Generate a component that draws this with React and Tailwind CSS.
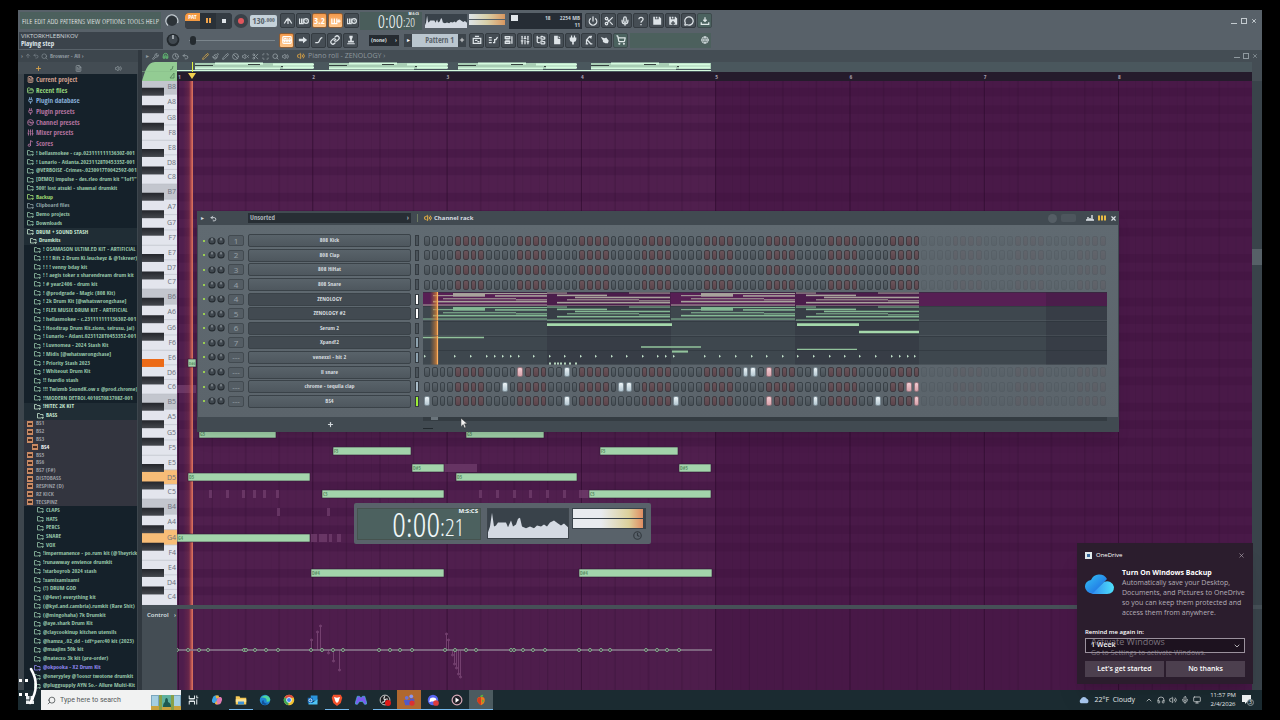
import {
  ArrowUp,
  Ban,
  ChevronDown,
  ChevronUp,
  Clock,
  Disc3,
  FileText,
  FolderOpen,
  FolderTree,
  Globe,
  Headphones,
  KeyboardMusic,
  Link,
  Magnet,
  MessageCircle,
  Mic,
  Monitor,
  Music2,
  Paintbrush,
  Pencil,
  Plug,
  Plus,
  Power,
  Scan,
  Scissors,
  Search,
  ShoppingCart,
  SlidersVertical,
  Undo2,
  Volume2,
  VolumeX,
  Wrench,
  X,
} from 'lucide-react';

const SEMI = 8.75;
const OCTAVE = SEMI * 12;
const KEYS_TOP = -2;
const BLACK_ROWS = [1, 3, 5, 8, 10];
const BAR = 134.3;

const CATEGORIES = [
  ['Current project', 'text-[#d3a08e]', FileText],
  ['Recent files', 'text-[#96d67c]', FolderOpen],
  ['Plugin database', 'text-[#86aed6]', Plug],
  ['Plugin presets', 'text-[#b3739f]', Plug],
  ['Channel presets', 'text-[#b3739f]', Disc3],
  ['Mixer presets', 'text-[#b3739f]', SlidersVertical],
  ['Scores', 'text-[#b3739f]', Music2],
];

// [name, depth, tone]
const FOLDERS = [
  ['! bellasmokee - cap.02311111113630Z-001', 0],
  ['! Lunario - Atlanta.20231128T045335Z-001', 0],
  ['@VERBOISE -Crimes-.0230917T004259Z-001', 0],
  ['[DEMO] impulse - des.rleo drum kit "1of1"', 0],
  ['500! lost atsuki - shawnaI drumkit', 0],
  ['Backup', 0, 'lime'],
  ['Clipboard files', 0, 'grey'],
  ['Demo projects', 0],
  ['Downloads', 0],
  ['DRUM + SOUND STASH', 0, 'open'],
  ['Drumkits', 1, 'open'],
  ['!  OSAMASON ULTIM.ED KIT - ARTIFICIAL', 2],
  ['! ! ! Rift 2 Drum Ki.leucheyz & @1skreer)', 2],
  ['! ! ! venny bday kit', 2],
  ['! ! aegis toker x sharendream drum kit', 2],
  ['! # year2406 - drum kit', 2],
  ['! @prodgrade - Magic (808 Kit)', 2],
  ['! 2k Drum Kit [@whatswrongchase]', 2],
  ['! FLEX MUSIX DRUM KIT - ARTIFICIAL', 2],
  ['! hellasmokee - c.23111111113630Z-001', 2],
  ['! Hoodtrap Drum Kit.zions, teirusu, jai)', 2],
  ['! Lunario - Atlant.0231128T045335Z-001', 2],
  ['! Luvnomea - 2024 Stash Kit', 2],
  ['! Midis [@whatswrongchase]', 2],
  ['! Priority Stash 2023', 2],
  ['! Whiteout Drum Kit', 2],
  ['!! feardio stash', 2],
  ['!!! Twizmb SoundK.ow x @prod.chrome)', 2],
  ['!!MODERN DETROI.4010ST083708Z-001', 2],
  ['!HITEC 2K KIT', 2, 'open'],
  ['BASS', 3, 'open'],
];

const SAMPLES = ['BS1', 'BS2', 'BS3', 'BS4', 'BS5', 'BS6', 'BS7 (F#)', 'DISTOBASS', 'RESPINZ (D)', 'RZ KICK', 'TECSPINZ'];

const KITS = [
  ['CLAPS', 3],
  ['HATS', 3],
  ['PERCS', 3],
  ['SNARE', 3],
  ['VOX', 3],
  ['!impermanence - po.rum kit (@1heyrick', 2],
  ['!runawway envience drumkit', 2],
  ['!starboyrob 2024 stash', 2],
  ['!xamixamixami', 2],
  ['(!) DRUM GOD', 2],
  ['(@4evr) everything kit', 2],
  ['(@kyd.and.cambria).rumkit (Rare Shit)', 2],
  ['(@mingohaha) 7k Drumkit', 2],
  ['@aye.shark Drum Kit', 2],
  ['@claycookinup kitchen utensils', 2],
  ['@hamza_.02_dd - tdf+perc40 kit (2023)', 2],
  ['@maajins 50k kit', 2],
  ['@natecxo 3k kit (pre-order)', 2],
];

const LAST_KITS = [
  ['@okpooka - X2 Drum Kit', 2, 'blue'],
  ['@oneryyley @1ooscr twotone drumkit', 2],
  ['@pluggsupply AYN So.- Allure Multi-Kit', 2],
];

const INDENT = ['pl-[3px]', 'pl-[6px]', 'pl-[10px]', 'pl-[13px]'];

const TONES = {
  green: 'text-[#96c4a8]',
  lime: 'text-[#a3dc74]',
  grey: 'text-[#8fa3a6]',
  open: 'text-[#c6e6cf] bg-[#202d35]',
  blue: 'text-[#8f86ee]',
};

// x, centre y, width, label
const NOTES = [
  [11, 282, 8, 'D#6'],
  [22, 353, 77, 'G5'],
  [11, 396, 122, 'D5'],
  [0, 457, 133, 'G4'],
  [156, 370, 78, 'F5'],
  [235, 387, 32, 'D#5'],
  [145, 413, 122, 'C5'],
  [134, 492, 133, 'D#4'],
  [289, 353, 78, 'G5'],
  [279, 396, 121, 'D5'],
  [423, 370, 78, 'F5'],
  [502, 387, 32, 'D#5'],
  [412, 413, 122, 'C5'],
  [402, 492, 133, 'D#4'],
];

const GHOSTS = [
  [32, 413, 3], [49, 413, 3], [65, 413, 3], [76, 413, 3], [86, 413, 3], [99, 413, 3],
  [302, 413, 3], [319, 413, 3], [336, 413, 3], [352, 413, 3], [369, 413, 3], [386, 413, 3], [402, 413, 11],
  [267, 387, 33], [100, 431, 3], [150, 431, 3], [134, 457, 6], [142, 457, 8], [152, 457, 3], [160, 457, 4], [0, 308, 19],
];

const VELOCITY = [
  0, 11, 22, 31, 67, 69, 78, 89, 101, 134, 145, 156, 166, 202, 213, 223, 235, 268, 278, 289, 299, 334, 337, 346, 356,
  368, 402, 413, 424, 433, 469, 480, 490, 502,
];
const SPIKES = [
  [134, 31], [140, 23], [143, 17], [151, 44], [156, 52], [162, 61], [269, 25], [271, 31], [275, 46], [277, 55], [279, 59], [281, 65], [283, 68],
];

const BLOCK_A = [
  [0, 12, 124, 1], [10, 8.5, 114, 1.5], [20, 6, 73, 1], [93, 7, 31, 1], [10, 3, 20, 1], [30, 1, 32, 3.5], [62, 1, 62, 1], [72, 3, 52, 1.5],
];
const BLOCK_B = [
  [0, 13, 123, 1], [0, 0.5, 20, 1], [10, 2.5, 50, 1.5], [28, 4.5, 95, 1.5], [82, 0.5, 41, 1], [20, 7, 72, 1], [92, 8, 31, 1], [10, 9.5, 113, 1.5],
];
const HIT_DOTS = [
  1, 31, 47, 63, 71, 79, 87, 95, 110, 126, 141, 157, 172, 188, 203, 219, 234, 242, 250, 281, 296, 312, 328, 343, 359, 374,
  390, 406, 421, 436, 452, 468, 476, 484, 491,
];

const CHANNELS = [
  { slot: '1', name: '808 Kick', steps: [] },
  { slot: '2', name: '808 Clap', steps: [] },
  { slot: '3', name: '808 HiHat', steps: [] },
  { slot: '4', name: '808 Snare', steps: [] },
  { slot: '4', name: 'ZENOLOGY', lane: 'selected', meter: 'bg-white' },
  { slot: '5', name: 'ZENOLOGY #2', lane: 'chords', meter: 'bg-white' },
  { slot: '6', name: 'Serum 2', lane: 'serum' },
  { slot: '7', name: 'Xpand!2', lane: 'xpand', meter: 'bg-[#8ea3b0]' },
  { slot: '---', name: 'venexxi - hit 2', lane: 'hits', meter: 'bg-[#8ea3b0]' },
  { slot: '---', name: 'll snare', steps: [12, 18, 41, 42, 44, 50] },
  { slot: '---', name: 'chrome - tequila clap', steps: [10, 25, 26, 62, 63], meter: 'bg-[#a9bcc8]' },
  { slot: '---', name: 'BS4', steps: [0, 18, 32, 44, 50, 58, 63], meter: 'bg-[#9dee35]' },
];

const SPECTRUM =
  'M0 30V24L2 18L4 4L6 18L8 17L10 14H18L20 19L23 12L25 18L28 16L30 10L32 9L34 18L38 20L42 18L46 20L49 17L53 18L56 16L59 18L62 14L66 12L70 15L73 17L76 15L80 19V30Z';

function Tool({ icon: Icon, label, hot, green }) {
  return (
    <button
      type="button"
      aria-label={label}
      className={`flex size-[15px] shrink-0 items-center justify-center rounded-xs border ${
        hot
          ? 'border-[#8c5c34] bg-linear-to-b from-[#f39a4b] to-[#ffc78c] text-white'
          : green
          ? 'border-[#3e4b4d] bg-[#4b625f] text-[#dfe8e8]'
          : 'border-[#343b41] bg-[#454d54] text-[#dde3e7]'
      }`}
    >
      <Icon className="size-[10px]" strokeWidth={3} />
    </button>
  );
}

function Knob({ small }) {
  return (
    <svg viewBox="0 0 14 14" className={small ? 'size-[8px] shrink-0' : 'size-[14px] shrink-0'} aria-hidden="true">
      <circle cx="7" cy="7" r="6.3" fill="#23292e" />
      <circle cx="7" cy="6.5" r="4.6" fill="#40484f" />
      <path d="M7 6V2" stroke="#c6ced3" strokeWidth="1.4" />
    </svg>
  );
}

/* the big knob wears a light ring that marks its level */
function MainKnob() {
  return (
    <svg viewBox="0 0 14 14" className="size-[14px] shrink-0" aria-hidden="true">
      <circle cx="7" cy="7" r="5" fill="#2c3338" />
      <path d="M3 11.500A6 6 0 1 1 12.500 9" fill="none" stroke="#c9d1d6" strokeWidth="1.2" />
    </svg>
  );
}

function Metronome(props) {
  return (
    <svg viewBox="0 0 24 24" fill="none" stroke="currentColor" {...props}>
      <path d="M3 18 9 8h6l6 10M12 19V4M8 11l4-4 4 4" />
    </svg>
  );
}

function Keys(props) {
  return (
    <svg viewBox="0 0 24 24" fill="none" stroke="currentColor" {...props}>
      <path d="M2 6v12h12V6M8 6v12M19 8v8M15 12h8" />
    </svg>
  );
}

function KeysClock(props) {
  return (
    <svg viewBox="0 0 24 24" fill="none" stroke="currentColor" {...props}>
      <path d="M1 6v12h9V6M6 6v12" />
      <circle cx="17" cy="12" r="5.500" />
      <path d="M17 9v3h2" strokeWidth="2" />
    </svg>
  );
}

function StepEdit(props) {
  return (
    <svg viewBox="0 0 24 24" fill="none" stroke="currentColor" {...props}>
      <path d="M2 6h7M2 12h7M2 18h7M12 18h4V11h3L23 5" />
    </svg>
  );
}

function Stamp(props) {
  return (
    <svg viewBox="0 0 24 24" fill="currentColor" {...props}>
      <path d="M8 2h8v4l-2 4v4h5v4H5v-4h5v-4L8 6zM3 20h18v2H3z" />
    </svg>
  );
}

function Slide(props) {
  return (
    <svg viewBox="0 0 24 24" fill="none" stroke="currentColor" {...props}>
      <path d="M3 18h6c6 0 3-12 11-12" />
    </svg>
  );
}

function Arrow(props) {
  return (
    <svg viewBox="0 0 24 24" fill="currentColor" {...props}>
      <path d="M2 9h10V4l10 8-10 8v-5H2z" />
    </svg>
  );
}

function Page(props) {
  return (
    <svg viewBox="0 0 24 24" fill="currentColor" {...props}>
      <path d="M5 2h9v7h6v13H5zM16 2l4 5h-4z" />
    </svg>
  );
}

function PlugSolid(props) {
  return (
    <svg viewBox="0 0 24 24" fill="currentColor" {...props}>
      <path d="M7 1h3v5h4V1h3v5h3v5q0 5-6 6v6h-4v-6q-6-1-6-6V6h3z" />
    </svg>
  );
}

/* a figure bending over, the tempo tapper */
function Tapper(props) {
  return (
    <svg viewBox="0 0 24 24" fill="none" stroke="currentColor" {...props}>
      <path d="M4 21h6M6 21V12l7-8 5 4M8 12l8 9h4M15 3h4" />
    </svg>
  );
}

function Hand(props) {
  return (
    <svg viewBox="0 0 24 24" fill="currentColor" {...props}>
      <path d="M2 5l9 3 4-2 6 8-2 6h-6l-6-3v-4z" />
    </svg>
  );
}

function Disk({ plus, ...props }) {
  return (
    <svg viewBox="0 0 24 24" fill="currentColor" {...props}>
      <path d="M3 2h4v6h9V2h2l4 4v15H3zM9 2h4v4H9z" />
      {plus && <path d="M12 12v10M7 17h10" stroke="#454d54" />}
    </svg>
  );
}

function DiskPlus(props) {
  return <Disk plus {...props} />;
}

function Question(props) {
  return (
    <svg viewBox="0 0 24 24" fill="none" stroke="currentColor" {...props}>
      <path d="M7 8c0-6 10-6 10 0 0 4-5 4-5 8M12 19v3" />
    </svg>
  );
}

function ThreeTwo() {
  return <span className="text-[9px] leading-none">3.2</span>;
}

function PlaylistGlyph(props) {
  return (
    <svg viewBox="0 0 24 24" fill="none" stroke="currentColor" {...props}>
      <path d="M3 8h18v12H3zM7 3h10M7 13h6M13 16h5" />
    </svg>
  );
}

function RackGlyph(props) {
  return (
    <svg viewBox="0 0 24 24" fill="none" stroke="currentColor" {...props}>
      <path d="M3 4h11v4H3zM3 12h11M3 16h11v4H3zM19 3v18" />
    </svg>
  );
}

function DownloadTray(props) {
  return (
    <svg viewBox="0 0 24 24" fill="none" stroke="currentColor" {...props}>
      <path d="M12 3v10M8 9l4 4 4-4M3 15v5h18v-5" />
    </svg>
  );
}

function Spectrum() {
  return (
    <svg viewBox="0 0 80 30" preserveAspectRatio="none" className="size-full bg-[#39424a]" aria-hidden="true">
      <path d={SPECTRUM} fill="#d4dae3" />
    </svg>
  );
}

function Toolbar() {
  return (
    <header className="flex h-[40px] shrink-0 flex-col bg-[#586169]">
      <div className="flex h-[21px] items-center pl-[2px]">
        <nav className="flex h-[17px] w-[141px] items-center justify-between bg-[#4c605d] px-[2px] font-['Open_Sans_Condensed_Light','Lato',sans-serif] text-[8px] font-light text-white">
          {['FILE', 'EDIT', 'ADD', 'PATTERNS', 'VIEW', 'OPTIONS', 'TOOLS', 'HELP'].map((item) => (
            <button key={item} type="button">
              {item}
            </button>
          ))}
        </nav>
        <div className="flex w-[22px] justify-center">
          <MainKnob />
        </div>
        <div className="ml-[2px] flex h-[16px] w-[47px] overflow-hidden rounded-sm bg-[#2a3138]">
          <button type="button" className="flex w-[15px] flex-col bg-[#3a3f45] text-center text-[6px] text-white">
            <span className="w-full bg-[#f49a42] leading-[8px]">PAT</span>
          </button>
          <button type="button" aria-label="Pause" className="flex w-[16px] items-center justify-center gap-px">
            <span className="h-[5px] w-[2px] bg-[#f0a44c]" />
            <span className="h-[5px] w-[2px] bg-[#f0a44c]" />
          </button>
          <button type="button" aria-label="Stop" className="flex w-[16px] items-center justify-center bg-[#343c43]">
            <span className="size-[4px] bg-[#dfe5e9]" />
          </button>
        </div>
        <button type="button" aria-label="Record" className="mx-[2px] flex size-[14px] items-center justify-center rounded-full bg-[#3a4148]">
          <span className="size-[6px] rounded-full bg-[#e0565c]" />
        </button>
        <div className="flex h-[12px] w-[27px] items-center justify-center rounded-xs bg-[#c5d2da] text-[9px] text-[#5a646c]">
          130<span className="text-[6px]">.000</span>
        </div>
        <div className="ml-[3px] flex gap-px">
          <Tool icon={Metronome} label="Metronome" />
          <Tool icon={KeysClock} label="Wait for input" />
          <Tool icon={ThreeTwo} label="Countdown" hot />
          <Tool icon={Keys} label="Step edit" hot />
          <Tool icon={KeysClock} label="Loop record" />
        </div>
        <div className="ml-px flex h-[18px] w-[62px] items-center justify-end bg-[#4a5d5b] pr-[3px] font-['Open_Sans_Condensed_Light','Lato',sans-serif] font-light text-[#f2f8f8]">
          <span className="text-[18px] leading-[18px]">0:00</span>
          <span className="flex w-[16px] flex-col">
            <span className="self-end font-['Open_Sans_Condensed','Lato',sans-serif] text-[4px] leading-[4px] font-bold">M:S:CS</span>
            <span className="text-[12px] leading-[14px]">:20</span>
          </span>
        </div>
        <div className="ml-[3px] h-[14px] w-[42px]">
          <Spectrum />
        </div>
        <div className="ml-[2px] flex h-[14px] w-[36px] flex-col gap-px">
          <div className="h-[5px] bg-linear-to-r from-[#dfe4e8] via-[#d9d0a8] to-[#d9975f]" />
          <div className="h-[5px] bg-linear-to-r from-[#dfe4e8] via-[#d9d0a8] to-[#d9975f]" />
        </div>
        <div className="ml-[4px] flex h-[16px] w-[73px] items-start justify-between bg-[#262d35] p-[2px] text-[6px] leading-[7px] text-[#c4cdd3]">
          <span className="h-[6px] w-[7px] bg-[#e1e6ea]" />
          <span className="pl-[18px]">18</span>
          <span className="text-right">
            2254 MB
            <br />
            11
          </span>
        </div>
        <div className="ml-[3px] flex gap-px">
          <Tool icon={Power} label="Audio" />
          <Tool icon={Scissors} label="Cut" />
          <Tool icon={Mic} label="Record audio" />
          <Tool icon={Question} label="Help" />
          <Tool icon={Disk} label="Save" />
          <Tool icon={DiskPlus} label="Save new version" />
          <Tool icon={MessageCircle} label="Chat" />
          <Tool icon={DownloadTray} label="Downloads" green />
        </div>
        <div className="ml-auto flex gap-[4px] pr-[5px] text-[#c3cacf]">
          <button type="button" aria-label="Minimize" className="flex size-[6px] items-end">
            <span className="h-px w-full bg-current" />
          </button>
          <button type="button" aria-label="Restore" className="size-[6px] border border-current" />
          <button type="button" aria-label="Close">
            <X className="size-[6px]" strokeWidth={4} />
          </button>
        </div>
      </div>
      <div className="flex h-[18px] items-center pl-px">
        <div className="flex h-[17px] w-[144px] flex-col justify-center bg-[#3b434b] pl-[2px] text-[7px] leading-[8px] text-[#dfe5e9]">
          <span className="font-['Open_Sans','Noto_Sans',sans-serif] text-[6px] text-[#d3dade]">VIKTORKHLEBNIKOV</span>
          <span>Playing step</span>
        </div>
        <div className="flex w-[20px] justify-center">
          <Knob />
        </div>
        <input
          type="range"
          aria-label="Song position"
          defaultValue={1}
          className="ml-[6px] h-[10px] w-[86px] appearance-none bg-transparent [&::-webkit-slider-runnable-track]:h-px [&::-webkit-slider-runnable-track]:bg-[#7b858c] [&::-webkit-slider-thumb]:-mt-[4px] [&::-webkit-slider-thumb]:h-[9px] [&::-webkit-slider-thumb]:w-[6px] [&::-webkit-slider-thumb]:appearance-none [&::-webkit-slider-thumb]:rounded-full [&::-webkit-slider-thumb]:bg-[#252b30]"
        />
        <div className="ml-[4px] flex gap-px">
          <Tool icon={KeyboardMusic} label="Typing keyboard" hot />
          <Tool icon={Arrow} label="Auto scroll" />
          <Tool icon={Slide} label="Slide" />
          <Tool icon={Link} label="Link" />
          <Tool icon={Stamp} label="Stamp" />
        </div>
        <button type="button" className="ml-[11px] flex h-[11px] w-[30px] items-center justify-between bg-[#252b31] px-[2px] text-[6px] text-[#d2d9dd]">
          (none) <span>›</span>
        </button>
        <button type="button" aria-label="Previous pattern" className="ml-[5px] h-[13px] w-[8px] bg-[#3c444b] text-[6px] text-white">
          ▸
        </button>
        <button type="button" className="h-[13px] w-[46px] bg-[#bac6cf] pr-[4px] text-right text-[8px] text-[#5a646d]">
          Pattern 1
        </button>
        <button type="button" aria-label="Add pattern" className="mr-[3px] flex h-[13px] w-[8px] items-center justify-center bg-[#3c444b] text-white">
          <Plus className="size-[6px]" strokeWidth={3} />
        </button>
        <div className="flex gap-px">
          <Tool icon={PlaylistGlyph} label="Playlist" />
          <Tool icon={StepEdit} label="Piano roll" />
          <Tool icon={RackGlyph} label="Channel rack" />
          <Tool icon={SlidersVertical} label="Mixer" />
          <Tool icon={FolderTree} label="Browser" />
          <Tool icon={Page} label="Project" />
          <Tool icon={PlugSolid} label="Plugin picker" />
          <Tool icon={Tapper} label="Tempo tapper" />
          <Tool icon={Hand} label="Touch" />
          <Tool icon={ShoppingCart} label="Shop" green />
        </div>
        <div className="ml-[2px] flex h-[15px] w-[81px] items-center justify-end bg-[#4c605d] pr-[2px] text-[#c9d3d5]">
          <Globe className="size-[8px]" strokeWidth={3} />
        </div>
      </div>
    </header>
  );
}

function FolderGlyph() {
  return (
    <svg viewBox="0 0 14 12" className="h-[6px] w-[7px] shrink-0" fill="none" stroke="currentColor" strokeWidth="1.6" aria-hidden="true">
      <path d="M8 10H1V1h4l1.5 2H12v4M9 9h4l-2 2.500z" />
    </svg>
  );
}

function FolderRow({ item }) {
  const [name, depth, tone = 'green'] = item;
  return (
    <button
      type="button"
      className={`flex min-h-0 w-full items-center gap-[2px] text-left whitespace-nowrap ${INDENT[depth]} ${TONES[tone]}`}
    >
      <FolderGlyph />
      <span>{name}</span>
    </button>
  );
}

function Browser() {
  return (
    <aside className="flex w-[120px] shrink-0 flex-col bg-[#3d464d] text-[6px] leading-[7px]">
      <div className="flex h-[12px] items-center gap-[2px] pl-[3px] text-[#8d979e]">
        <span>›</span>
        <ArrowUp className="size-[6px]" />
        <Undo2 className="size-[6px]" />
        <Search className="size-[7px]" />
        <span>Browser - All ›</span>
      </div>
      <div className="flex h-[12px] items-center justify-around bg-[#434c53] text-[#a6afb5]">
        <Plus className="size-[7px] text-[#d6a24c]" strokeWidth={3} />
        <FileText className="size-[7px]" />
        <Volume2 className="size-[7px]" />
      </div>
      <div className="mr-[1px] ml-[6px] flex min-h-0 flex-1 flex-col overflow-hidden bg-[#15212a]">
        <div className="grid h-[75px] shrink-0 auto-rows-fr text-[7px]">
          {CATEGORIES.map(([name, colour, Icon]) => (
            <button key={name} type="button" className={`flex items-center gap-[2px] pl-[3px] text-left ${colour}`}>
              <Icon className="size-[7px]" strokeWidth={3} />
              {name}
            </button>
          ))}
        </div>
        <div className="grid h-[271px] shrink-0 auto-rows-fr">
          {FOLDERS.map((item) => (
            <FolderRow key={item[0]} item={item} />
          ))}
        </div>
        <div className="grid h-[86px] shrink-0 auto-rows-fr bg-[#33353f] text-[#989ca2]">
          {SAMPLES.map((name) => (
            <button
              key={name}
              type="button"
              className={`flex min-h-0 items-center gap-[3px] text-left ${name === 'BS4' ? 'pl-[8px] text-[#eef1f3]' : 'pl-[3px]'}`}
            >
              <span className="flex h-[6px] w-[6px] items-center justify-center bg-[#c98a63]">
                <span className="h-[2px] w-[4px] bg-[#452d23]" />
              </span>
              {name}
            </button>
          ))}
        </div>
        <div className="grid h-[157px] shrink-0 auto-rows-fr">
          {KITS.map((item) => (
            <FolderRow key={item[0]} item={item} />
          ))}
        </div>
        <div className="grid min-h-0 flex-1 auto-rows-fr">
          {LAST_KITS.map((item) => (
            <FolderRow key={item[0]} item={item} />
          ))}
        </div>
      </div>
    </aside>
  );
}

function Keyboard() {
  const whites = ['B', 'A', 'G', 'F', 'E', 'D', 'C'];
  const upper = (SEMI * 7) / 4;
  const lower = (SEMI * 5) / 3;
  const keyTop = (i) => (i < 4 ? i * upper : 4 * upper + (i - 4) * lower);
  return (
    <svg className="w-[35px] shrink-0 self-stretch bg-[#dfe1ea] font-['Open_Sans','Noto_Sans',sans-serif]" role="img" aria-label="Piano keys">
      <defs>
        <linearGradient id="black-key" x1="0" x2="0" y1="0" y2="1">
          <stop offset="0" stopColor="#24262c" />
          <stop offset="1" stopColor="#44474d" />
        </linearGradient>
      </defs>
      {[8, 7, 6, 5, 4].map((oct, o) => (
        <g key={oct} transform={`translate(0 ${KEYS_TOP + o * OCTAVE})`}>
          {whites.map((letter, i) => {
            const name = letter + oct;
            const lit = name === 'D5' || name === 'G4';
            const height = i < 4 ? upper : lower;
            return (
              <g key={name}>
                <rect y={keyTop(i)} width="35" height={height} fill={lit ? '#f8bd77' : letter === 'B' ? '#c3c6ce' : '#e3e5ed'} />
                <path d={`M0 ${keyTop(i)}H35`} stroke="#b9bcc6" strokeWidth="0.6" />
                <text x="34" y={keyTop(i) + height / 2 + 2.5} textAnchor="end" fontSize="7" fill="#6c717c">
                  {name}
                </text>
              </g>
            );
          })}
          {BLACK_ROWS.map((row) => (
            <rect
              key={row}
              y={row * SEMI}
              width="22"
              height={SEMI - 0.8}
              fill={oct === 6 && row === 8 ? '#ec6a17' : 'url(#black-key)'}
            />
          ))}
        </g>
      ))}
    </svg>
  );
}

function GridDefs() {
  return (
    <defs>
      <pattern id="rows" width="60" height={OCTAVE} y={KEYS_TOP} patternUnits="userSpaceOnUse">
        <rect width="60" height={OCTAVE} fill="#501f4e" />
        {BLACK_ROWS.map((row) => (
          <rect key={row} y={row * SEMI} width="60" height={SEMI} fill="#491a48" />
        ))}
      </pattern>
      <pattern id="beats" width={BAR} height="40" x="1" patternUnits="userSpaceOnUse">
        {Array.from({ length: 16 }, (_, i) => (
          <path key={i} d={`M${(i * BAR) / 16 + 0.5} 0V40`} stroke="#2c0a2c" strokeWidth="1" opacity={i === 0 ? 0.7 : i % 4 === 0 ? 0.4 : 0.12} />
        ))}
      </pattern>
      <linearGradient id="playhead">
        <stop offset="0" stopColor="#a8404a" stopOpacity="0" />
        <stop offset="0.6" stopColor="#b4474a" stopOpacity="0.25" />
        <stop offset="0.8" stopColor="#d65f50" stopOpacity="0.75" />
        <stop offset="1" stopColor="#e07a62" />
      </linearGradient>
      <linearGradient id="rack-playhead">
        <stop offset="0" stopColor="#c07030" stopOpacity="0" />
        <stop offset="1" stopColor="#e08838" stopOpacity="0.8" />
      </linearGradient>
    </defs>
  );
}

function NoteGrid() {
  return (
    <svg className="h-full min-w-0 flex-1 bg-[#4c1b4a]" role="img" aria-label="Notes">
      <GridDefs />
      <rect width="100%" height="100%" fill="url(#rows)" />
      <rect x="538" width="100%" height="100%" fill="#3b0c3c" opacity="0.3" />
      <rect width="100%" height="100%" fill="url(#beats)" />
      {GHOSTS.map(([x, y, w]) => (
        <rect key={`${x}-${y}`} x={x} y={y - 4} width={w} height="8" fill="#74406f" opacity="0.7" />
      ))}
      <rect x="6" width="10" height="100%" fill="url(#playhead)" />
      {NOTES.map(([x, y, w, name]) => (
        <g key={`${x}-${y}`}>
          <rect x={x} y={y - 4} width={w} height="8" fill="#a3d4ab" stroke="#2f1935" strokeWidth="0.6" />
          <text x={x + 1} y={y + 2} fontSize={w < 10 ? 4 : 5} fill="#5d8f68">
            {name}
          </text>
        </g>
      ))}
    </svg>
  );
}

function ControlLane() {
  return (
    <svg className="h-full min-w-0 flex-1 bg-[#4e1d4c]" role="img" aria-label="Control lane">
      <rect x="538" width="100%" height="100%" fill="#3b0c3c" opacity="0.3" />
      <rect width="100%" height="100%" fill="url(#beats)" />
      <rect x="6" width="10" height="100%" fill="url(#playhead)" />
      {SPIKES.map(([x, y]) => (
        <g key={x} stroke="#74406f" fill="#74406f">
          <path d={`M${x + 0.5} 41V${y}`} />
          <circle cx={x + 0.5} cy={y} r="1" />
        </g>
      ))}
      <path d="M0 41H535" stroke="#8d7c8f" strokeWidth="1.5" />
      {VELOCITY.map((x) => (
        <circle key={x} cx={x} cy="41" r="1.5" fill="#4e1d4c" stroke="#80b68b" />
      ))}
    </svg>
  );
}

function Overview() {
  return (
    <svg className="h-[10px] w-full bg-[#4a575d]" aria-hidden="true">
      {[18, 152, 281, 414].map((x, i) => (
        <g key={x}>
          <rect x={x} y="1" width={i === 3 ? 120 : 118} height="6" fill="#a8cdb4" />
          <path d={`M${x + 20} 1.500h48M${x + 78} 2.500h41M${x} 6.500h85M${x + 88} 5.500h31`} stroke="#d5fbdf" strokeWidth="2" />
          <path d={`M${x} 3.500h18M${x + 53} 2.500h12M${x + 86} 4.500h2`} stroke="#35413e" />
        </g>
      ))}
      <path d="M0 8.500H534" stroke="#d5fbdf" />
      <path d="M15.500 0v10" stroke="#e2f03c" />
    </svg>
  );
}

function Ruler() {
  return (
    <svg className="h-[9px] w-full bg-[#251b2c]" aria-hidden="true">
      {[1, 2, 3, 4, 5, 6, 7, 8].map((bar, i) => (
        <text key={bar} x={i * BAR + 1} y="7" fontSize="6" fill="#a69fac">
          {bar}
        </text>
      ))}
      <path d="M11 1h8l-4 6z" fill="#f4cf4f" />
    </svg>
  );
}

function Lane({ kind }) {
  const chord = kind === 'selected' ? '#a8a49c' : '#85b994';
  return (
    <svg viewBox="0 0 684 14" preserveAspectRatio="none" className="h-full min-w-0 flex-1" aria-hidden="true">
      <rect width="684" height="14" fill={kind === 'selected' ? '#571f54' : '#3e474e'} />
      {[124, 372, 623].map((x) => (
        <rect key={x} x={x} width={x === 623 ? 61 : 124} height="14" fill="#1d1b28" opacity="0.2" />
      ))}
      <path d="M0 0H684" stroke="#2b3238" />
      {(kind === 'selected' || kind === 'chords') &&
        [0, 124, 248, 373].map((left, n) =>
          (n % 2 ? BLOCK_B : BLOCK_A).map(([x, y, w, h]) => (
            <rect key={`${left}-${x}-${y}`} x={left + x} y={y} width={w} height={h} fill={chord} />
          ))
        )}
      {kind === 'serum' && <path d="M124 3.500H249M374 3.500H436M436 10.500H496" stroke="#a5d8ab" strokeWidth="2.500" />}
      {kind === 'xpand' && <path d="M0 1.500H61M218 10.500H278M374 13H434" stroke="#92c39c" strokeWidth="1.500" />}
      {kind === 'hits' && (
        <>
          <path d="M249 1.500h16" stroke="#92c39c" strokeWidth="2" />
          {HIT_DOTS.map((x) => (
            <path key={x} d={`M${x} 4.500v3l2-1.500z`} fill="#c3e2cb" />
          ))}
          {[126, 131, 134, 137, 141, 146, 152].map((x) => (
            <rect key={x} x={x} y="12" width="2" height="2" fill="#b5d3bd" />
          ))}
        </>
      )}
      <rect x="7" width="7" height="14" fill="url(#rack-playhead)" />
      <path d="M14.500 0V14" stroke="#ffb060" strokeWidth="1.200" />
    </svg>
  );
}

function Steps({ name, on }) {
  return (
    <div className="grid h-full min-w-0 flex-1 auto-cols-fr grid-flow-col items-center">
      {Array.from({ length: 88 }, (_, i) => {
        const red = i % 8 >= 4;
        const lit = on.includes(i);
        const colour = lit
          ? red
            ? 'border-[#94747c] bg-linear-to-b from-[#f2ccd2] to-[#d9a3ac]'
            : 'border-[#7c8b94] bg-linear-to-b from-[#eef5f8] to-[#b5c8d2]'
          : red
          ? 'border-[#403a40] bg-linear-to-b from-[#6b555b] to-[#5c444b]'
          : 'border-[#394147] bg-linear-to-b from-[#5c656c] to-[#485056]';
        return (
          <button
            key={i}
            type="button"
            aria-label={`${name} step ${i + 1}`}
            aria-pressed={lit}
            className={`mx-px h-[10px] rounded-xs border ${colour} ${i >= 64 ? 'opacity-20' : ''}`}
          />
        );
      })}
    </div>
  );
}

function ChannelRow({ channel }) {
  return (
    <div className="flex min-h-0 min-w-0 items-center pr-[11px] pl-[4px]">
      <span className="flex w-[4px] justify-center">
        <span className="size-[2px] rounded-full bg-[#aef04a]" />
      </span>
      <span className="ml-[2px] flex gap-px">
        <Knob small />
        <Knob small />
      </span>
      <span className="ml-[3px] flex h-[11px] w-[16px] shrink-0 items-center justify-center rounded-xs border border-[#424a50] bg-[#545d64] font-['Open_Sans','Noto_Sans',sans-serif] text-[8px] text-[#98a2a9]">
        {channel.slot}
      </span>
      <button
        type="button"
        className={`ml-[4px] h-[13px] w-[163px] shrink-0 rounded-xs border border-[#3a4248] text-center text-[6px] text-[#d5dbdf] ${
          channel.lane && channel.lane !== 'hits' ? 'bg-[#424a51]' : 'bg-linear-to-b from-[#59636a] to-[#4e575e]'
        }`}
      >
        {channel.name}
      </button>
      <span className="mr-[4px] ml-[4px] flex h-[11px] w-[4px] shrink-0 border border-[#343b41]">
        <span className={`flex-1 ${channel.meter || 'bg-[#4b545b]'}`} />
      </span>
      {channel.lane ? <Lane kind={channel.lane} /> : <Steps name={channel.name} on={channel.steps} />}
    </div>
  );
}

function ChannelRack() {
  return (
    <section className="absolute top-[161px] left-[55px] flex h-[221px] w-[922px] flex-col bg-[#414a51] shadow-lg">
      <div className="flex h-[14px] items-center pr-[2px] pl-[4px] text-[8px] text-[#d7dde1]">
        <button type="button" aria-label="Rack menu" className="w-[9px] text-left text-[6px]">
          ▸
        </button>
        <button type="button" aria-label="Undo" className="w-[38px]">
          <Undo2 className="size-[7px]" strokeWidth={3} />
        </button>
        <button type="button" className="flex h-[10px] w-[163px] items-center justify-between bg-[#272e34] px-[2px] text-[7px] text-[#aab3b9]">
          Unsorted <span>›</span>
        </button>
        <span className="ml-[6px] h-[8px] w-px bg-[#6f7c62]" />
        <Volume2 className="ml-[6px] size-[8px] text-[#eab144]" strokeWidth={3} />
        <h2 className="ml-[2px] font-['Open_Sans','Noto_Sans',sans-serif] text-[6px] font-bold">Channel rack</h2>
        <div className="ml-auto flex items-center gap-[4px]">
          <span className="size-[9px] rounded-full bg-[#555e65]" />
          <span className="mr-[6px] h-[8px] w-[15px] rounded-xs bg-[#4d565d]" />
          <svg viewBox="0 0 8 6" className="h-[6px] w-[8px]" aria-hidden="true">
            <path d="M0 5h8M2 5V2M4 5V3M6 5V0" stroke="#dfe5e9" strokeWidth="1.4" />
          </svg>
          <svg viewBox="0 0 8 6" className="h-[6px] w-[8px]" aria-hidden="true">
            <path d="M0 .5h2v5H0zM3 .5h2v5H3zM6 .5h2v5H6z" fill="#e8bb45" />
          </svg>
          <button type="button" aria-label="Close rack">
            <X className="size-[7px]" strokeWidth={4} />
          </button>
        </div>
      </div>
      <div className="mr-px ml-px flex flex-1 flex-col justify-center bg-linear-to-b from-[#606a71] to-[#5b646b]">
        <div className="grid h-[175px] grid-cols-1 grid-rows-12">
          {CHANNELS.map((channel) => (
            <ChannelRow key={channel.name} channel={channel} />
          ))}
        </div>
      </div>
      <div className="flex h-[15px] justify-between pr-[12px] pl-[130px] text-[#d2d8dc]">
        <button type="button" aria-label="Add channel">
          <Plus className="size-[7px]" strokeWidth={4} />
        </button>
        <div className="flex w-[684px] flex-col justify-between pb-[3px]">
          <div className="h-[4px] bg-[#343c42] pl-[8px]">
            <div className="h-[3px] w-[7px] bg-[#6a747b]" />
          </div>
          <div className="h-px w-[10px] bg-[#22292e]" />
        </div>
      </div>
      <svg viewBox="0 0 10 15" className="absolute top-[207px] left-[264px] h-[11px] w-[7px]" aria-hidden="true">
        <path d="M0 0v12l3-3 2 5 2-1-2-5h4z" fill="#f2f2f2" stroke="#222" strokeWidth="0.6" />
      </svg>
    </section>
  );
}

function TimeWidget() {
  return (
    <section className="absolute top-[453px] left-[212px] flex h-[41px] w-[297px] items-center gap-[3px] rounded-xs bg-[#59626a] px-[3px]">
      <div className="flex h-[32px] w-[124px] items-center justify-end border border-[#46534f] bg-[#4c615f] pr-[2px] font-['Open_Sans_Condensed_Light','Lato',sans-serif] font-light text-[#f0f7f8]">
        <span className="text-[34px] leading-[30px]">0:00</span>
        <span className="flex w-[38px] flex-col">
          <span className="self-end font-['Open_Sans','Noto_Sans',sans-serif] text-[6px] leading-[6px] font-bold">M:S:CS</span>
          <span className="text-[24px] leading-[26px]">:21</span>
        </span>
      </div>
      <div className="ml-[3px] h-[31px] w-[82px] border border-[#3c444b]">
        <Spectrum />
      </div>
      <div className="flex w-[74px] flex-col items-end">
        <div className="flex w-full flex-col gap-px bg-[#39424a] p-px pr-[3px]">
          <div className="h-[9px] bg-linear-to-r from-[#e8ebef] from-40% via-[#dcd09a] via-80% to-[#de8c62]" />
          <div className="h-[9px] bg-linear-to-r from-[#e8ebef] from-40% via-[#dcd09a] via-80% to-[#de8c62]" />
        </div>
        <Clock className="mt-[2px] mr-[4px] size-[9px] text-[#32393f]" strokeWidth={3} />
      </div>
    </section>
  );
}

function PianoRoll() {
  const icons = [Wrench, Magnet, Clock, Undo2];
  const tools = [Pencil, Paintbrush, Pencil, Ban, VolumeX, Scissors, Scan, Search, Volume2];
  return (
    <main className="flex min-w-0 flex-1 border-l-4 border-[#30383f] bg-[#444d54]">
      <div className="relative flex min-w-0 flex-1 flex-col">
        <div className="flex h-[12px] shrink-0 items-center gap-[3px] pl-[4px] text-[#8f999f]">
          <span className="text-[6px]">▸</span>
          {icons.map((Icon, i) => (
            <Icon key={i} className={`size-[7px] ${Icon === Magnet ? '-rotate-45 text-[#62bb72]' : ''}`} strokeWidth={3} />
          ))}
          <span className="w-[7px]" />
          {tools.map((Icon, i) => (
            <Icon key={i} className={`size-[7px] ${i === 0 ? 'text-[#c9a04d]' : ''}`} strokeWidth={3} />
          ))}
          <Volume2 className="ml-[5px] size-[8px] text-[#cf9c45]" strokeWidth={3} />
          <h1 className="font-['Open_Sans','Noto_Sans',sans-serif] text-[7px]">Piano roll - ZENOLOGY ›</h1>
          <span className="mr-[4px] ml-auto flex gap-[3px]">
            <span className="h-[5px] w-[6px] border-b border-current" />
            <span className="size-[6px] border border-current" />
            <X className="size-[6px]" strokeWidth={3} />
          </span>
        </div>
        <div className="flex h-[19px] shrink-0">
          <svg viewBox="0 0 35 19" className="h-[19px] w-[35px] shrink-0" aria-hidden="true">
            <path d="M0 19C3 10 5 0 13 0H35V19Z" fill="#93cc93" />
            <path d="M28 8q3 0 3-4M28 16h4v-5z" stroke="#5c8b62" fill="none" />
            <path d="M0 9.500h35" stroke="#86bd88" strokeWidth="0.5" />
          </svg>
          <div className="flex min-w-0 flex-1 flex-col">
            <Overview />
            <Ruler />
          </div>
          <div className="w-[10px] bg-[#444d54]" />
        </div>
        <div className="flex min-h-0 flex-1">
          <Keyboard />
          <NoteGrid />
          <div className="w-[10px] shrink-0 bg-[#39434a] pt-[168px]">
            <div className="h-[16px] bg-[#566067]" />
          </div>
        </div>
        <div className="h-[4px] shrink-0 bg-[#465057]" />
        <div className="flex h-[81px] shrink-0">
          <div className="flex w-[35px] shrink-0 justify-between pt-px pr-px pl-[5px] font-['Open_Sans','Noto_Sans',sans-serif] text-[6px] leading-[10px] font-semibold text-[#dce2e6]">
            Control <span>›</span>
          </div>
          <ControlLane />
          <div className="w-[10px] shrink-0 bg-[#39434a]" />
        </div>
        <ChannelRack />
        <TimeWidget />
      </div>
    </main>
  );
}

function Toast() {
  return (
    <section className="absolute right-[9px] bottom-[26px] flex w-[176px] flex-col bg-[#2b1d2d] px-[8px] pt-[8px] pb-[7px] font-['Open_Sans','Noto_Sans',sans-serif] text-[7px] text-white shadow-xl">
      <div className="flex h-[8px] items-center gap-[4px]">
        <span className="flex size-[7px] items-center justify-center bg-[#dfe8ea]">
          <span className="size-[3px] bg-[#38699b]" />
        </span>
        <span className="text-[6px]">OneDrive</span>
        <button type="button" aria-label="Dismiss" className="ml-auto text-[#bdb5be]">
          <X className="size-[7px]" />
        </button>
      </div>
      <div className="mt-[9px] flex gap-[7px] text-[#b5adb7]">
        <svg viewBox="0 0 30 22" className="mt-[5px] h-[22px] w-[30px] shrink-0" aria-hidden="true">
          <defs>
            <linearGradient id="cloud-a" x1="0" x2="1" y2="1">
              <stop offset="0" stopColor="#35c4f5" />
              <stop offset="1" stopColor="#1a5fe0" />
            </linearGradient>
            <linearGradient id="cloud-b" x1="0" x2="1">
              <stop offset="0" stopColor="#2a7df0" />
              <stop offset="1" stopColor="#4fe0fb" />
            </linearGradient>
          </defs>
          <path d="M7 20a6.500 6.500 0 0 1-1-13A9 9 0 0 1 22 6l-13 14z" fill="url(#cloud-a)" />
          <path d="M8 20 19 9a7 7 0 0 1 10 5q0 7-7 7H8Q5 21 3 18z" fill="url(#cloud-b)" />
        </svg>
        <div className="min-w-0 leading-[10px] whitespace-nowrap">
          <h2 className="font-bold text-white">Turn On Windows Backup</h2>
          <p>
            Automatically save your Desktop,
            <br />
            Documents, and Pictures to OneDrive
            <br />
            so you can keep them protected and
            <br />
            access them from anywhere.
          </p>
        </div>
      </div>
      <label htmlFor="remind" className="mt-[9px] text-[6px] leading-[10px] font-semibold">
        Remind me again in:
      </label>
      <div className="relative mt-px">
        <select
          id="remind"
          defaultValue="week"
          className="block h-[15px] w-full appearance-none rounded-none border border-[#9b919d] bg-[#1d121f] pl-[5px] text-[7px] font-semibold text-white"
        >
          <option value="week">1 Week</option>
        </select>
        <ChevronDown className="absolute top-[4px] right-[4px] size-[8px]" />
      </div>
      <div className="mt-[8px] flex gap-[2px] text-[7px] font-semibold">
        <button type="button" className="h-[16px] flex-1 bg-[#4c3f4e]">
          Let's get started
        </button>
        <button type="button" className="h-[16px] flex-1 bg-[#4c3f4e]">
          No thanks
        </button>
      </div>
      <div className="pointer-events-none absolute top-[93px] left-[14px] whitespace-nowrap text-[#968e98]/80">
        <p className="text-[9px] leading-[12px]">Activate Windows</p>
        <p className="text-[7px] leading-[9px]">Go to Settings to activate Windows.</p>
      </div>
    </section>
  );
}

const APPS = [
  {
    name: 'Task view',
    art: <path d="M3 2v4h7V2M3 14v-4h7v4M3 8h7M13 2v2M13 7v7M12 5h3" fill="none" stroke="#dfe6e8" strokeWidth="1.4" />,
  },
  {
    name: 'Copilot',
    art: (
      <>
        <path d="M6 2h4l-3 10H3Q0 10 2 6 3 2 6 2" fill="#3da5e8" />
        <path d="M10 14H6L9 4h4q3 2 1 6-1 4-4 4" fill="#e07ab4" />
        <path d="M6 2h4l1 3-4 1zM5 13l2-4 2 5z" fill="#f2b33f" />
      </>
    ),
  },
  {
    name: 'File Explorer',
    open: true,
    art: (
      <>
        <path d="M1 3h5l1 2h8v9H1z" fill="#f5c956" />
        <path d="M1 7h14v4H1z" fill="#fbe39a" />
        <path d="M4 10h8v4H4z" fill="#3d93d8" />
      </>
    ),
  },
  {
    name: 'Edge',
    art: (
      <>
        <circle cx="8" cy="8" r="7" fill="#1f86d3" />
        <path d="M2 6q3-5 8-4 5 2 5 6-1 3-5 2 1-4-3-5-3-1-5 1" fill="#4fd79a" />
        <path d="M6 8q0 5 6 5-4 3-8 0-1-4 2-5" fill="#125097" />
      </>
    ),
  },
  {
    name: 'Chrome',
    art: (
      <>
        <circle cx="8" cy="8" r="7" fill="#f2c232" />
        <path d="M8 8 2 4.500A7 7 0 0 1 14.500 5H8z" fill="#dd4b3e" />
        <path d="M8 8 2 4.500A7 7 0 0 0 7 15z" fill="#3aa757" />
        <circle cx="8" cy="8" r="3.300" fill="#4285f4" stroke="#fff" />
      </>
    ),
  },
  {
    name: 'Outlook',
    art: (
      <>
        <path d="M5 2h9v7H5z" fill="#2a95dc" />
        <path d="M2 7l6 4 6-4v7H2z" fill="#4fc3f4" />
        <path d="M1 5h7v7H1z" fill="#1469ba" />
        <circle cx="4.500" cy="8.500" r="2" fill="none" stroke="#fff" />
      </>
    ),
  },
  {
    name: 'Brave',
    open: true,
    art: (
      <>
        <path d="M3 1h10l2 4-2 7-5 4-5-4-2-7z" fill="#f2512c" />
        <path d="M4 4l4 1 4-1-2 6-2 2-2-2z" fill="#fff" />
      </>
    ),
  },
  {
    name: 'Gamepad',
    art: <path d="M3 3h3l2 2 2-2h3l3 10-3 1-3-4H6l-3 4-3-1z" fill="#7a5cf0" stroke="#3ec8d8" strokeWidth="0.8" />,
  },
  {
    name: 'OBS',
    open: true,
    art: (
      <>
        <circle cx="8" cy="8" r="6.500" fill="#1b1b1f" stroke="#d8d8d8" strokeWidth="1.2" />
        <path d="M8 3q-3 3 0 5M4 11q4 0 4-3M12 7q-3-1-4 1" stroke="#ddd" fill="none" strokeWidth="1.5" />
        <circle cx="12" cy="12" r="4" fill="#e11919" />
      </>
    ),
  },
  {
    name: 'Teams',
    alert: true,
    art: (
      <>
        <circle cx="5" cy="5" r="2.500" fill="#6873dc" />
        <circle cx="11" cy="3" r="2.500" fill="#8a94ef" />
        <path d="M1 8h8v7H3zM9 6h6v7H9z" fill="#5059c9" />
        <circle cx="12" cy="12" r="3.500" fill="#dc3131" />
      </>
    ),
  },
  {
    name: 'Discord',
    open: true,
    art: (
      <>
        <circle cx="8" cy="8" r="7" fill="#5865f2" />
        <path d="M4 6q4-3 8 0l1 5-3-1H6l-3 1z" fill="#fff" />
        <circle cx="12" cy="12" r="3.800" fill="#dd3c3c" />
      </>
    ),
  },
  {
    name: 'Media player',
    open: true,
    art: (
      <>
        <circle cx="8" cy="8" r="6.500" fill="#201f27" stroke="#d8aab8" strokeWidth="1.6" />
        <path d="M6 4.500v7l5-3.500z" fill="#fff" />
      </>
    ),
  },
  {
    name: 'FL Studio',
    active: true,
    art: (
      <>
        <path d="M8 4q5-1 5 4 0 5-5 7-5-3-5-7 0-5 5-4" fill="#ee7a1d" />
        <path d="M3 8q0-4 5-4v11q-5-3-5-7" fill="#d4391f" />
        <path d="M7 4q0-3 4-3 0 4-4 3M9 7l3 2-2 3z" fill="#5bb13d" />
      </>
    ),
  },
];

function Taskbar() {
  return (
    <footer className="flex h-[20px] shrink-0 items-stretch bg-[#1b2b31] font-['Open_Sans','Noto_Sans',sans-serif] text-[7px] text-[#eef2f3]">
      <button type="button" aria-label="Start" className="flex w-[23px] items-center justify-center">
        <svg viewBox="0 0 8 8" className="size-[8px]" fill="#e6ecee" aria-hidden="true">
          <path d="M0 0h3.500v3.500H0zM4.500 0H8v3.500H4.500zM0 4.500h3.500V8H0zM4.500 4.500H8V8H4.500z" />
        </svg>
      </button>
      <label className="flex w-[140px] items-center bg-[#f1f2f2] pl-[6px] text-[#3f4446]">
        <Search className="size-[9px] -scale-x-100" />
        <input
          aria-label="Search"
          placeholder="Type here to search"
          className="ml-[4px] w-[88px] font-['Roboto','Open_Sans',sans-serif] text-[7px] placeholder:text-[#54585a]"
        />
        <svg viewBox="0 0 30 19" className="ml-auto h-[19px] w-[30px]" aria-hidden="true">
          <path d="M0 4h30v15H0z" fill="#7aa6bd" />
          <path d="M0 15h30v4H0z" fill="#c9a23f" />
          <path d="M1 5h6v10H1zM23 5h6v10h-6z" fill="#a5cfe2" />
          <path d="M8 4h3v15H8zM20 4h3v15h-3z" fill="#88a048" />
          <path d="M11 4h9v12h-9z" fill="#5fb09e" />
          <path d="M12 16q0-4 2-5 0-4 1.500-4T17 11q3 1 3 5z" fill="#1e5950" />
        </svg>
      </label>
      <div className="flex">
        {APPS.map((app) => (
          <button
            key={app.name}
            type="button"
            aria-label={app.name}
            className={`flex w-[24px] items-center justify-center border-b ${
              app.alert ? 'bg-[#b0682f]' : app.active ? 'bg-[#4c5b60]' : ''
            } ${app.open || app.alert || app.active ? 'border-[#76b9ed]' : 'border-transparent'}`}
          >
            <svg viewBox="0 0 16 16" className="size-[12px]" aria-hidden="true">
              {app.art}
            </svg>
          </button>
        ))}
      </div>
      <div className="ml-auto flex items-center gap-[4px] pr-[10px]">
        <svg viewBox="0 0 14 10" className="h-[8px] w-[12px]" aria-hidden="true">
          <path d="M3 9a3 3 0 0 1 0-5 4 4 0 0 1 7.500-.5A3 3 0 0 1 11 9z" fill="#a9c8f0" />
        </svg>
        <span className="mr-[6px] whitespace-pre">22°F  Cloudy</span>
        <ChevronUp className="size-[8px]" />
        <Headphones className="size-[8px]" />
        <Volume2 className="size-[8px]" />
        <Mic className="size-[8px]" />
        <Monitor className="size-[8px]" />
        <span className="mr-[2px] ml-[5px] text-center text-[6px] leading-[9px]">
          11:57 PM
          <br />
          2/4/2026
        </span>
        <span className="relative">
          <svg viewBox="0 0 10 10" className="size-[10px]" aria-hidden="true">
            <path d="M0 0h9v7H5L3 9V7H0z" fill="#f2f5f6" />
          </svg>
          <span className="absolute top-[4px] left-[5px] flex size-[7px] items-center justify-center rounded-full border border-[#8b979b] bg-[#22343a] text-[5px] leading-none">
            3
          </span>
        </span>
      </div>
    </footer>
  );
}

export default function App() {
  return (
    <div className="h-screen bg-black px-[18px] py-[10px] font-['Open_Sans_Condensed','Lato',sans-serif]">
      <div className="relative flex h-full flex-col">
        <Toolbar />
        <div className="flex min-h-0 flex-1">
          <Browser />
          <PianoRoll />
        </div>
        <Taskbar />
        <Toast />
        {/* smiley doodle over the corner of the desktop */}
        <svg viewBox="0 0 20 40" className="absolute bottom-[4px] left-0 h-[40px] w-[20px]" aria-hidden="true">
          <path d="M1 13h3v3H1zM7 13h3v3H7zM1 27h3v3H1zM7 27h3v3H7z" fill="#fff" />
          <path d="M13 3q10 17-1 34" fill="none" stroke="#fff" strokeWidth="2.500" strokeLinecap="round" />
        </svg>
      </div>
    </div>
  );
}
